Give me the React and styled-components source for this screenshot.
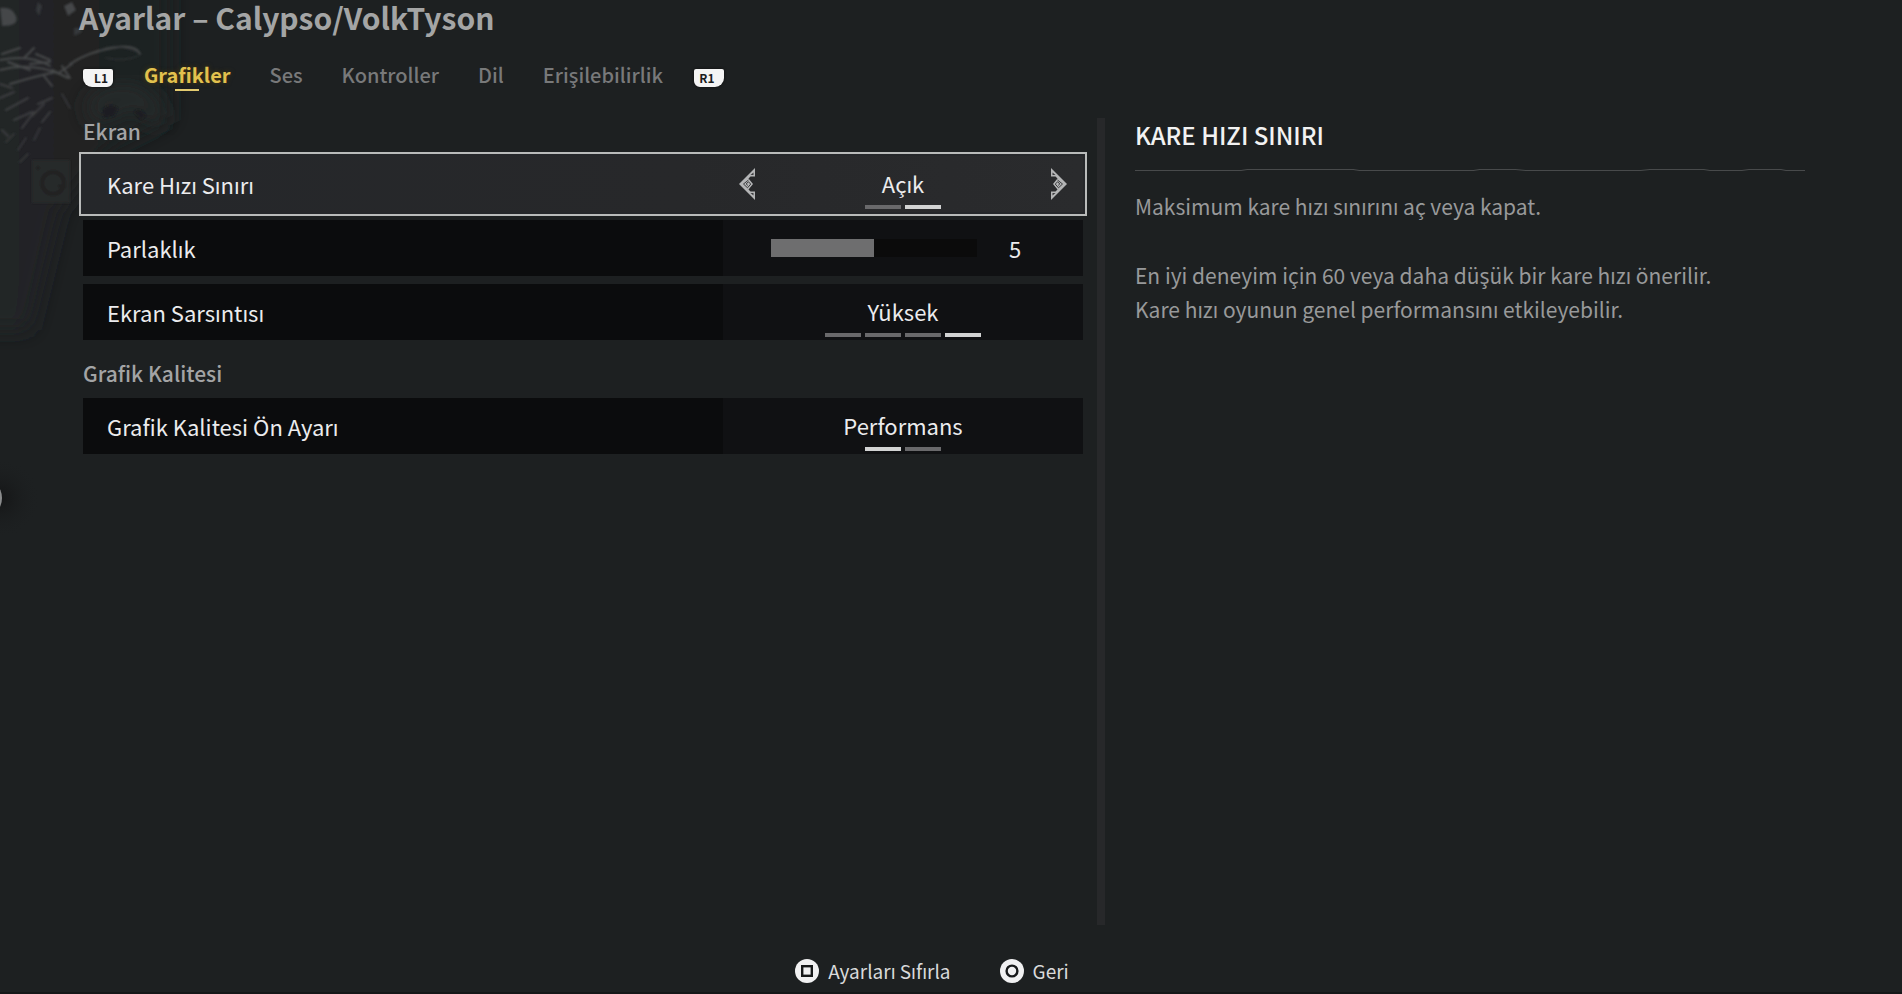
import React, { useState } from "react";
import styled, { createGlobalStyle } from "styled-components";

const GlobalStyle = createGlobalStyle`
  * { box-sizing: border-box; }
  body {
    margin: 0;
    background: #1d2021;
    color: #ececee;
    font-family: "Noto Sans CJK SC", "Noto Sans", sans-serif;
    font-size: 22px;
  }
  button, input { font: inherit; color: inherit; margin: 0; }
  h1, h2, p { margin: 0; }
`;

const Page = styled.div`
  position: relative;
  min-height: 100vh;
  display: flex;
  flex-direction: column;
  padding: 0 97px 9px 83px;
  border-bottom: 2px solid #151718;
`;

const Backdrop = styled.svg`
  position: absolute;
  left: 0;
  top: 0;
  width: 240px;
  height: 560px;
  pointer-events: none;
`;

const Header = styled.header`
  position: relative;
  display: flex;
  flex-direction: column;
  gap: 18px;
  margin-bottom: 29px;
`;

const Title = styled.h1`
  margin-left: -4px;
  margin-top: -5px;
  font-size: 30px;
  line-height: 44px;
  font-weight: 700;
  color: #a4a5a5;
`;

const TabBar = styled.nav`
  display: flex;
  align-items: center;
  gap: 31px;
  padding-top: 4px;
`;

const TabList = styled.div`
  display: flex;
  gap: 39px;
`;

const Tab = styled.button`
  position: relative;
  padding: 0;
  border: 0;
  background: none;
  font-size: 20px;
  line-height: 28px;
  font-weight: ${(p) => (p.$active ? 700 : 500)};
  color: ${(p) => (p.$active ? "#e2c14e" : "#78797a")};
  text-shadow: ${(p) => (p.$active ? "0 0 5px #4a3b10" : "none")};
  cursor: pointer;

  &::after {
    content: "";
    display: ${(p) => (p.$active ? "block" : "none")};
    position: absolute;
    left: 50%;
    bottom: -2px;
    width: 24px;
    height: 2px;
    margin-left: -12px;
    background: #e3cb70;
  }
`;

const Shoulder = styled.button`
  width: 30px;
  height: 18px;
  margin-top: 6px;
  padding: ${(p) => (p.$side === "left" ? "0 0 0 6px" : "0 4px 0 0")};
  border: 0;
  border-radius: ${(p) => (p.$side === "left" ? "2px 2px 6px 9px" : "2px 2px 9px 6px")};
  background: #f4f4f4;
  box-shadow: 0 0 3px #0c0d0e;
  color: #1a1b1c;
  font-size: 12px;
  line-height: 16px;
  font-weight: 700;
  text-align: center;
`;

const Main = styled.main`
  position: relative;
  flex: 1;
  display: grid;
  grid-template-columns: minmax(0, 1014fr) 8px minmax(0, 700fr);
`;

const Settings = styled.div`
  display: flex;
  flex-direction: column;
  gap: 20px;
  margin-right: 14px;
`;

const Group = styled.section`
  display: flex;
  flex-direction: column;
  gap: 8px;
`;

const GroupTitle = styled.h2`
  margin-bottom: 4px;
  font-size: 21px;
  line-height: 26px;
  font-weight: 500;
  color: #a3a4a5;
`;

const Row = styled.div`
  position: relative;
  display: grid;
  grid-template-columns: minmax(0, 16fr) minmax(0, 9fr);
  height: 56px;
  background: ${(p) =>
    p.$selected
      ? "linear-gradient(90deg, #25272a, #27282a 60%, #2a2b2d)"
      : "linear-gradient(90deg, #0b0c0d 64%, #101113 64%)"};
  box-shadow: ${(p) => (p.$selected ? "0 0 0 2px #25272a" : "none")};
  outline: ${(p) => (p.$selected ? "2px solid #b9bbba" : "none")};
  outline-offset: 2px;
`;

const Label = styled.span`
  align-self: center;
  padding-left: 24px;
  line-height: 28px;
`;

const ValueCell = styled.div`
  display: flex;
  align-items: center;
  justify-content: space-between;
  padding: 0 16px;
`;

const Choice = styled.div`
  flex: 1;
  align-self: stretch;
  display: flex;
  flex-direction: column;
  align-items: center;
  gap: 8px;
  padding: 13px 0 3px;
  line-height: 28px;
`;

const Pips = styled.div`
  display: flex;
  gap: 4px;
`;

const Pip = styled.input`
  appearance: none;
  width: 36px;
  height: 4px;
  background: #69696b;

  &:checked { background: #d2d3d3; }
`;

const Arrow = styled.button`
  display: flex;
  padding: 0;
  border: 0;
  background: none;
  transform: ${(p) => (p.$flip ? "scaleX(-1)" : "none")};
  cursor: pointer;
`;

const SliderCell = styled.div`
  display: flex;
  align-items: center;
  padding: 0 56px 0 48px;
`;

const Slider = styled.input`
  appearance: none;
  flex: 1;
  min-width: 0;
  height: 18px;
  background: linear-gradient(90deg, #6e6e6f var(--fill), #0b0b0b var(--fill));

  &::-webkit-slider-thumb {
    appearance: none;
    width: 1px;
    height: 18px;
    background: transparent;
  }
`;

const SliderValue = styled.output`
  width: 50px;
  padding-left: 32px;
  line-height: 28px;
`;

const ScrollBar = styled.div`
  background: #27282a;
`;

const Detail = styled.aside`
  padding-left: 30px;
  color: #98999a;
`;

const DetailTitle = styled.h2`
  font-size: 24px;
  line-height: 34px;
  font-weight: 500;
  color: #f2f2f2;
`;

const Rule = styled.svg`
  display: block;
  width: 100%;
  height: 4px;
  margin: 16px 0 17px;
`;

const Text = styled.p`
  font-size: 21px;
  line-height: 34px;

  & + & { margin-top: 35px; }
`;

const Footer = styled.footer`
  position: relative;
  display: flex;
  justify-content: center;
  gap: 49px;
  margin: 34px 24px 0 0;
`;

const Action = styled.button`
  display: flex;
  align-items: center;
  gap: 9px;
  padding: 0;
  border: 0;
  background: none;
  font-size: 19px;
  line-height: 24px;
  color: #d9dadb;
  cursor: pointer;
`;

function ArrowGlyph() {
  return (
    <svg width="16" height="32" viewBox="0 0 16 32" fill="none" aria-hidden="true">
      <path d="M16 0V8.500H11.500L9.500 10.500 14 16 9.500 21.500 11.500 23.500H16V32L0 16z" fill="#b4b5b6" />
      <path d="M14.500 4.500V7H11.500zM14.500 27.500V25H11.500z" fill="#3a3b3d" />
      <path d="M9.500 12L4.500 16l4 3.800L11.800 16 9.300 13.800 7.200 16l1.600 1.400" stroke="#3a3b3d" strokeWidth="1" />
    </svg>
  );
}

function PadGlyph({ shape }) {
  return (
    <svg width="24" height="24" viewBox="0 0 24 24" aria-hidden="true">
      <circle cx="12" cy="12" r="12" fill="#f1f1f2" />
      {shape === "square" ? (
        <rect x="7.200" y="7.200" width="9.600" height="9.600" fill="none" stroke="#17191a" strokeWidth="2.400" />
      ) : (
        <circle cx="12" cy="12" r="5.400" fill="none" stroke="#17191a" strokeWidth="2.400" />
      )}
    </svg>
  );
}

function Foliage() {
  return (
    <Backdrop viewBox="0 0 240 560" aria-hidden="true">
      <defs>
        <linearGradient id="shade" x1="0" x2="1" y1="0" y2="0">
          <stop offset="0" stopColor="#242627" />
          <stop offset="1" stopColor="#1d2021" />
        </linearGradient>
        <radialGradient id="halo">
          <stop offset="0" stopColor="#141516" />
          <stop offset="1" stopColor="#1d2021" stopOpacity="0" />
        </radialGradient>
        <filter id="soft"><feGaussianBlur stdDeviation="1" /></filter>
        <filter id="haze" x="-20%" y="-20%" width="140%" height="140%"><feGaussianBlur stdDeviation="10" /></filter>
      </defs>
      <path d="M-30-30H170V120L110 150 60 210 30 330H-30z" fill="url(#shade)" filter="url(#haze)" />
      <g filter="url(#soft)" fill="none" stroke="#46484a" strokeLinecap="round">
        <path d="M0 60Q30 54 50 66M0 70Q30 62 60 74M10 84Q36 76 56 72M70 64Q88 52 112 48T140 54" strokeWidth="2" />
        <path d="M2 54l18-6M8 62l22 8M24 58l10-10M30 64l20-2M36 54l14 6M44 76l8 10M52 70l16 8M60 72l12-8M62 66l8 12" strokeWidth="2" />
        <path d="M0 98l14-6M6 110l22-12M14 120l18-8M22 128l12-16M2 130l6 6M32 116l12-12M38 104l14-6M42 122l8-10M0 84l12 4" strokeWidth="2" stroke="#3c3e40" />
        <path d="M18 150l8-12M6 142l8-8M34 140l6-12M62 94l8 14M20 162l8-8" strokeWidth="2" stroke="#343638" />
        <path d="M100 50q14-8 38 2M106 58q18 4 32-2" strokeWidth="1" stroke="#353739" />
      </g>
      <g filter="url(#soft)">
        <path d="M0 8Q12 6 16 16T2 26zM64 6l8-4 4 8-8 6z" fill="#444648" />
        <path d="M74 28l6 0 2 4-8 4zM38 2l4 4-3 10-3-6z" fill="#36383a" />
      </g>
      <g filter="url(#haze)">
        <path d="M84 104Q96 86 120 84T156 100Q168 114 160 126L148 124 140 112 128 108 114 122 92 124z" fill="#282a2c" />
      </g>
      <g filter="url(#soft)">
        <path d="M102 110q8-8 16-2l-4 8-10 2zM134 112q6-6 12 4l-5 4z" fill="#1d1f20" />
        <rect x="32" y="160" width="38" height="43" fill="#27292a" />
        <circle cx="53" cy="183" r="11" fill="none" stroke="#212324" strokeWidth="4" />
        <circle cx="38" cy="168" r="2" fill="#212324" />
        <path d="M58 186h8" stroke="#212324" strokeWidth="3" />
      </g>
      <circle cx="0" cy="498" r="40" fill="url(#halo)" />
      <circle cx="-18" cy="498" r="20" fill="#8b8c8d" />
    </Backdrop>
  );
}

function Choices({ name, options, value, onChange }) {
  return (
    <Choice>
      <span>{options[value]}</span>
      <Pips role="radiogroup" aria-label={name}>
        {options.map((o, i) => (
          <Pip key={o} type="radio" name={name} aria-label={o} checked={i === value} onChange={() => onChange(i)} />
        ))}
      </Pips>
    </Choice>
  );
}

const TABS = ["Grafikler", "Ses", "Kontroller", "Dil", "Erişilebilirlik"];

export default function App() {
  const [tab, setTab] = useState(0);
  const [limit, setLimit] = useState(1);
  const [brightness, setBrightness] = useState(5);
  const [shake, setShake] = useState(3);
  const [preset, setPreset] = useState(0);
  const step = (d) => setTab((t) => Math.min(TABS.length - 1, Math.max(0, t + d)));

  return (
    <>
      <GlobalStyle />
      <Page>
        <Foliage />
        <Header>
          <Title>Ayarlar – Calypso/VolkTyson</Title>
          <TabBar>
            <Shoulder $side="left" onClick={() => step(-1)}>L1</Shoulder>
            <TabList role="tablist">
              {TABS.map((t, i) => (
                <Tab key={t} role="tab" aria-selected={i === tab} $active={i === tab} onClick={() => setTab(i)}>
                  {t}
                </Tab>
              ))}
            </TabList>
            <Shoulder $side="right" onClick={() => step(1)}>R1</Shoulder>
          </TabBar>
        </Header>
        <Main>
          <Settings>
            <Group>
              <GroupTitle>Ekran</GroupTitle>
              <Row $selected>
                <Label>Kare Hızı Sınırı</Label>
                <ValueCell>
                  <Arrow aria-label="Önceki" onClick={() => setLimit(0)}><ArrowGlyph /></Arrow>
                  <Choices name="Kare Hızı Sınırı" options={["Kapalı", "Açık"]} value={limit} onChange={setLimit} />
                  <Arrow $flip aria-label="Sonraki" onClick={() => setLimit(1)}><ArrowGlyph /></Arrow>
                </ValueCell>
              </Row>
              <Row>
                <Label as="label" htmlFor="brightness">Parlaklık</Label>
                <SliderCell>
                  <Slider
                    id="brightness"
                    type="range"
                    min="0"
                    max="10"
                    value={brightness}
                    onChange={(e) => setBrightness(Number(e.target.value))}
                    style={{ "--fill": `${brightness * 10}%` }}
                  />
                  <SliderValue htmlFor="brightness">{brightness}</SliderValue>
                </SliderCell>
              </Row>
              <Row>
                <Label>Ekran Sarsıntısı</Label>
                <ValueCell>
                  <Choices name="Ekran Sarsıntısı" options={["Kapalı", "Düşük", "Orta", "Yüksek"]} value={shake} onChange={setShake} />
                </ValueCell>
              </Row>
            </Group>
            <Group>
              <GroupTitle>Grafik Kalitesi</GroupTitle>
              <Row>
                <Label>Grafik Kalitesi Ön Ayarı</Label>
                <ValueCell>
                  <Choices name="Grafik Kalitesi Ön Ayarı" options={["Performans", "Kalite"]} value={preset} onChange={setPreset} />
                </ValueCell>
              </Row>
            </Group>
          </Settings>
          <ScrollBar />
          <Detail>
            <DetailTitle>KARE HIZI SINIRI</DetailTitle>
            <Rule viewBox="0 0 669 4" preserveAspectRatio="none" aria-hidden="true">
              <path d="M0 2.500H106L112 1.500H218L224 2.500H338L344 1.500H380L390 2.500H505L514 1.500H568L574 2.500H606L613 1.500H645L650 2.500H669" stroke="#484a4b" strokeWidth="1" fill="none" />
            </Rule>
            <Text>Maksimum kare hızı sınırını aç veya kapat.</Text>
            <Text>
              En iyi deneyim için 60 veya daha düşük bir kare hızı önerilir.
              <br />
              Kare hızı oyunun genel performansını etkileyebilir.
            </Text>
          </Detail>
        </Main>
        <Footer>
          <Action><PadGlyph shape="square" />Ayarları Sıfırla</Action>
          <Action><PadGlyph shape="circle" />Geri</Action>
        </Footer>
      </Page>
    </>
  );
}
